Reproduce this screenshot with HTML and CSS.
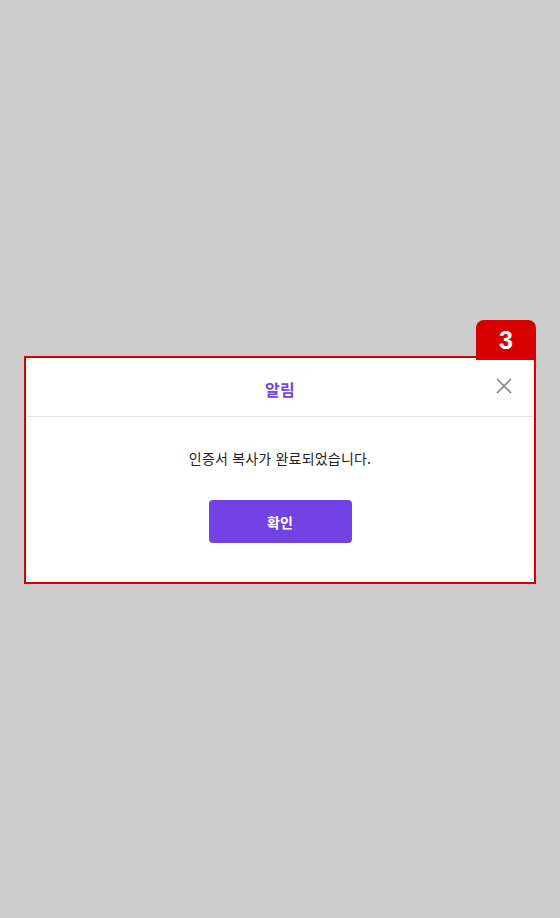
FILE: index.html
```html
<!DOCTYPE html>
<html lang="ko">
<head>
<meta charset="utf-8">
<link rel="stylesheet" href="styles.css">
</head>
<body>
<div class="stage">
  <div class="dialog">
    <div class="badge">3</div>
    <div class="header">
      <h2 class="title">알림</h2>
      <button class="close" aria-label="닫기">
        <svg width="16" height="16" viewBox="0 0 16 16"><path d="M1.5 1.5L14.5 14.5M14.5 1.5L1.5 14.5" stroke="#80858c" stroke-width="1.7" stroke-linecap="round" fill="none"/></svg>
      </button>
    </div>
    <div class="body">
      <p class="message">인증서 복사가 완료되었습니다.</p>
      <button class="confirm">확인</button>
    </div>
  </div>
</div>
</body>
</html>
```
FILE: styles.css
```css
html, body {
  margin: 0;
  padding: 0;
  background: #cccccc;
  font-family: "Noto Sans CJK KR", "Noto Sans", sans-serif;
}
.stage {
  width: 560px;
  height: 918px;
  box-sizing: border-box;
  padding: 356px 24px 0;
}
.dialog {
  position: relative;
  background: #ffffff;
  border: 2px solid #d60000;
}
.badge {
  position: absolute;
  top: -38px;
  right: -2px;
  width: 60px;
  height: 40px;
  background: #d60000;
  border-radius: 8px 8px 0 0;
  color: #ffffff;
  font-family: "Liberation Sans", Arial, sans-serif;
  font-weight: bold;
  font-size: 25px;
  line-height: 40px;
  text-align: center;
}
.header {
  position: relative;
  height: 58px;
  border-bottom: 1px solid #e3e3e3;
  display: flex;
  align-items: center;
  justify-content: center;
}
.title {
  margin: 0;
  font-size: 16px;
  font-weight: 700;
  color: #7043e4;
  line-height: 20px;
  padding-top: 4px;
  letter-spacing: 0.3px;
}
.close {
  position: absolute;
  right: 22px;
  top: 20px;
  width: 16px;
  height: 16px;
  padding: 0;
  border: 0;
  background: none;
  display: flex;
}
.body {
  display: flex;
  flex-direction: column;
  align-items: center;
  padding: 31px 0 39px;
}
.message {
  margin: 0;
  font-size: 14px;
  line-height: 20px;
  color: #222222;
  letter-spacing: 0.2px;
}
.confirm {
  margin-top: 32px;
  width: 143px;
  height: 43px;
  border: 0;
  border-radius: 4px;
  background: #7143e4;
  color: #ffffff;
  font-family: "Noto Sans CJK KR", "Noto Sans", sans-serif;
  font-size: 14px;
  font-weight: 700;
}
```
